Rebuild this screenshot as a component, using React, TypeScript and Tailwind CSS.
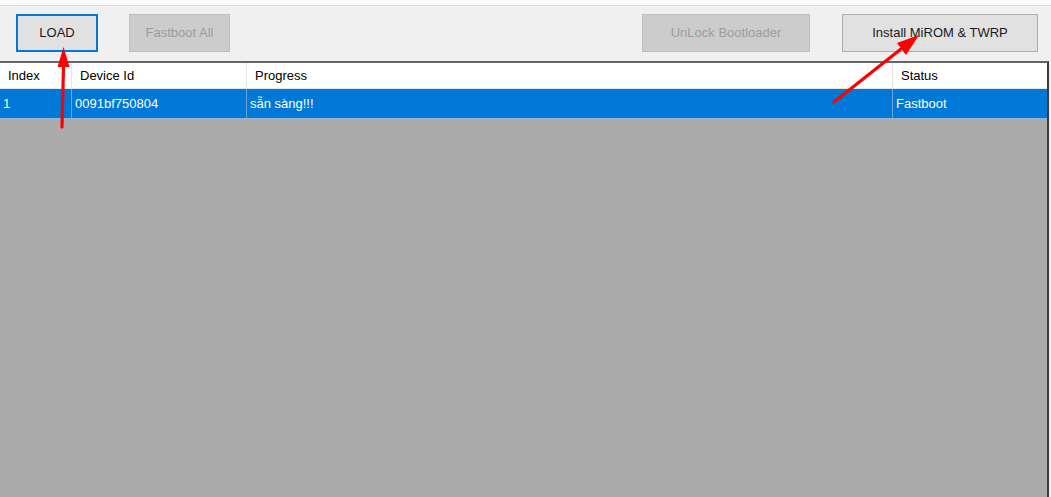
const cols = ['w-[72px]', 'w-[175px]', 'w-[646px]', 'flex-1'];

const Btn = ({ label, w, variant }: { label: string; w: string; variant: 'focus' | 'disabled' | 'normal' }) => {
  const style =
    variant === 'focus'
      ? 'border-2 border-[#0078d7] bg-[#e1e1e1] text-[#1a1a1a]'
      : variant === 'disabled'
        ? 'border border-[#bfbfbf] bg-[#cccccc] text-[#9d9d9d]'
        : 'border border-[#adadad] bg-[#e1e1e1] text-[#1a1a1a]';
  return (
    <div className={`${w} h-[38px] flex items-center justify-center text-[13px] ${style}`}>{label}</div>
  );
};

export default function App() {
  const header = ['Index', 'Device Id', 'Progress', 'Status'];
  const row = ['1', '0091bf750804', 'sẵn sàng!!!', 'Fastboot'];

  return (
    <div
      className="relative w-[1051px] h-[497px] bg-[#f0f0f0] flex flex-col overflow-hidden"
      style={{ fontFamily: '"Liberation Sans", Arial, sans-serif' }}
    >
      <div className="h-[6px] bg-[#fbfbfb] border-b border-[#dcdcdc]" />
      <div className="h-[55px] flex items-start pt-[8px]">
        <div className="ml-[16px]">
          <Btn label="LOAD" w="w-[82px]" variant="focus" />
        </div>
        <div className="ml-[31px]">
          <Btn label="Fastboot All" w="w-[101px]" variant="disabled" />
        </div>
        <div className="ml-auto">
          <Btn label="UnLock Bootloader" w="w-[168px]" variant="disabled" />
        </div>
        <div className="ml-[32px] mr-[13px]">
          <Btn label="Install MiROM & TWRP" w="w-[196px]" variant="normal" />
        </div>
      </div>
      <div className="flex-1 flex flex-col bg-[#ababab] border-t-2 border-[#646464] border-r-2 border-r-[#3a3a3a] mr-[2px]">
        <div className="flex h-[26px] bg-white border-b border-[#e5e5e5] text-[13px] text-black">
          {header.map((h, i) => (
            <div
              key={h}
              className={`${cols[i]} flex items-center pl-[8px] ${i < 3 ? 'border-r border-[#e5e5e5]' : ''}`}
            >
              {h}
            </div>
          ))}
        </div>
        <div className="flex h-[30px] bg-[#0078d7] text-[13px] text-white border-b border-[#8db5d9]">
          {row.map((c, i) => (
            <div
              key={i}
              className={`${cols[i]} flex items-center pl-[3px] ${i < 3 ? 'border-r border-[#6ca6d9]' : ''}`}
            >
              {c}
            </div>
          ))}
        </div>
      </div>
      <svg className="absolute inset-0 pointer-events-none" width="1051" height="497">
        <line x1="62" y1="127" x2="63.6" y2="62" stroke="#ff0000" strokeWidth="3.2" strokeLinecap="round" />
        <polygon points="63.5,47 57.5,67 69.5,67" fill="#ff0000" />
        <line x1="834" y1="102" x2="901" y2="49" stroke="#ff0000" strokeWidth="3.2" strokeLinecap="round" />
        <polygon points="919,35 897,43 906,55" fill="#ff0000" />
      </svg>
    </div>
  );
}
